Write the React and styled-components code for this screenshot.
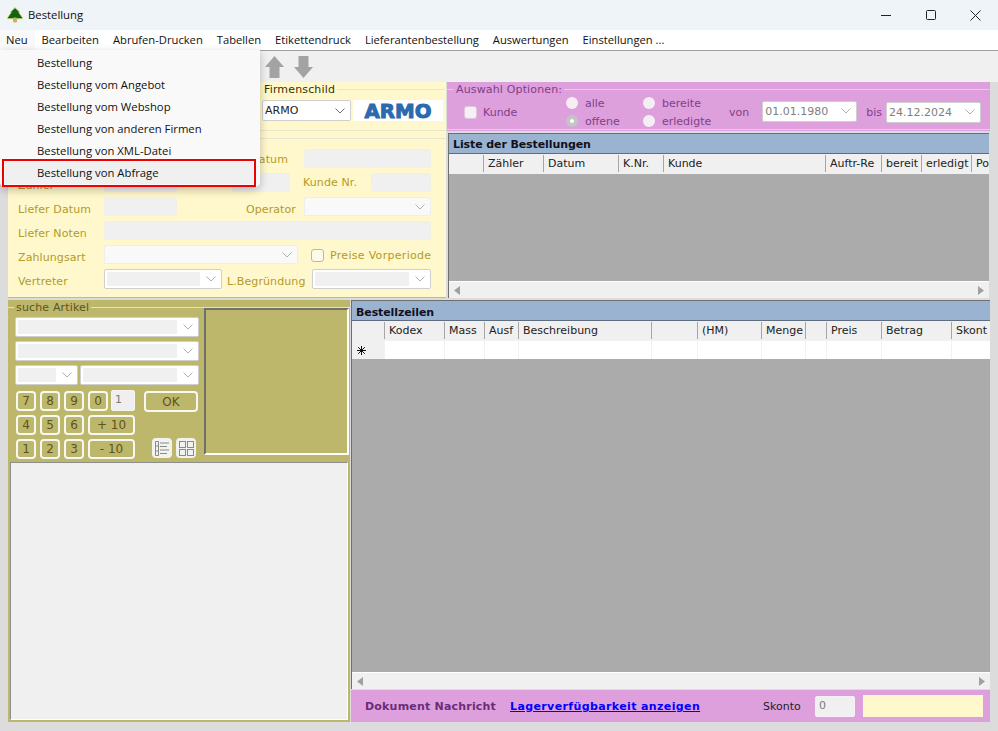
import React from "react";
import styled, { createGlobalStyle } from "styled-components";

const uiFont = `"Open Sans", "Noto Sans", sans-serif`;
const formFont = `"DejaVu Sans", "Noto Sans", sans-serif`;

const GlobalStyle = createGlobalStyle`
  html, body { margin: 0; padding: 0; background: #dcdcdc; }
  * { box-sizing: border-box; }
`;

const Window = styled.div`
  position: relative;
  width: 998px;
  height: 731px;
  overflow: hidden;
  display: flex;
  flex-direction: column;
  background: #dcdcdc;
  font-family: ${uiFont};
`;

const TitleBar = styled.div`
  height: 30px;
  flex: none;
  display: flex;
  align-items: center;
  padding-left: 7px;
  background: #eff4f9;
  font-size: 11.3px;
  color: #111;
`;

const TitleText = styled.span`
  margin: -2px 0 0 5px;
`;

const WinButtons = styled.div`
  margin-left: auto;
  display: flex;
`;

const WinButton = styled.div`
  width: 45px;
  height: 30px;
  display: flex;
  align-items: center;
  justify-content: center;
`;

const MenuBar = styled.div`
  height: 21px;
  flex: none;
  display: flex;
  background: #fff;
  border-bottom: 1px solid #a0a0a0;
`;

const MenuEntry = styled.div`
  padding: 0 7px;
  line-height: 20px;
  font-size: 11.2px;
  color: #111;
  background: ${p => (p.$open ? "#f9f9f9" : "transparent")};
  margin-left: ${p => (p.$open ? "-1px" : "0")};
`;

const Toolbar = styled.div`
  height: 31px;
  flex: none;
  display: flex;
  align-items: center;
  gap: 10px;
  padding-left: 265px;
  background: #f0f0f0;
`;

const Body = styled.div`
  flex: 1;
  display: flex;
  flex-direction: column;
  gap: 2px;
  padding: 0 8px 9px 8px;
`;

const TopRow = styled.div`
  height: 216px;
  flex: none;
  display: flex;
  gap: 1px;
`;

const BottomRow = styled.div`
  flex: 1;
  display: flex;
  gap: 1px;
`;

const YellowPanel = styled.div`
  width: 438px;
  flex: none;
  background: #fff8cc;
  border-bottom: 1px solid #b8b8a8;
  color: #b39a2a;
`;

const Group = styled.fieldset`
  margin: 0;
  min-width: 0;
  padding: 0;
  border: none;
  border-top: 1px solid ${p => p.$line || "#e9e6cf"};
`;

const Legend = styled.legend`
  margin-left: ${p => p.$left || 0}px;
  padding: 0 2px;
  height: 14px;
  line-height: 16px;
  font-family: ${formFont};
  font-size: 11px;
  letter-spacing: 0.15px;
  color: ${p => p.$color || "inherit"};
`;

const FirmRow = styled.div`
  height: 49px;
  padding-left: 254px;
  border-bottom: 1px solid #e9e6cf;
`;

const FirmGroup = styled(Group)`
  height: 48px;
  margin-right: 1px;
`;

const FirmControls = styled.div`
  display: flex;
  gap: 2px;
  margin-top: 4px;
`;

const FirmSelect = styled.div`
  width: 89px;
  flex: none;
`;

const Logo = styled.div`
  width: 90px;
  height: 21px;
  background: #fff;
  display: flex;
  align-items: center;
  justify-content: center;
`;

const FormGroup = styled(Group)`
  margin-top: 7px;
  border-bottom: none;
`;

const FormGrid = styled.div`
  display: grid;
  grid-template-columns: 86px 73px 45px 10px 58px 8px 6px 8px 59px 60px;
  grid-auto-rows: 19px;
  row-gap: 5px;
  padding: 10px 0 0 10px;
`;

const Cell = styled.div`
  grid-column: ${p => p.$col};
  grid-row: ${p => p.$row};
  min-width: 0;
`;

const Label = styled(Cell)`
  display: flex;
  align-items: center;
  justify-content: ${p => (p.$right ? "flex-end" : "flex-start")};
  padding-top: ${p => (p.$low ? 5 : p.$top || 0)}px;
  padding-right: ${p => (p.$right ? 2 : 0)}px;
  padding-left: ${p => p.$pad || 0}px;
  margin-left: ${p => p.$shift || 0}px;
  font-family: ${formFont};
  font-size: 11px;
  letter-spacing: 0.1px;
  white-space: nowrap;
`;

const Field = styled.div`
  height: ${p => p.$h || 19}px;
  background: ${p => p.$bg || "#f0f0f0"};
  border: 1px solid ${p => p.$edge || "#f0f0e6"};
  border-radius: 2px;
  font-family: ${formFont};
  font-size: 11px;
  line-height: 17px;
  padding-left: 3px;
  color: #7b7b7b;
`;

const SkontoField = styled(Field)`
  width: 40px;
  flex: none;
  border-color: #f8f0f8;
`;

const SelectBox = styled.div`
  position: relative;
  height: ${p => p.$h || 20}px;
  background: ${p => (p.$plain ? "#f9f9f9" : "#fff")};
  border: 1px solid ${p => (p.$plain ? "#eeeeea" : "#cfcfcf")};
  border-radius: 2px;
  padding: 2px 21px 2px 2px;
  display: flex;
  align-items: center;
  font-family: ${formFont};
  font-size: 11px;
  color: ${p => p.$color || "#808080"};
  white-space: nowrap;
`;

const SelectFill = styled.div`
  flex: 1;
  align-self: stretch;
  background: ${p => (p.$show ? "#f0f0f0" : "transparent")};
  display: flex;
  align-items: center;
`;

const ChevronWrap = styled.span`
  position: absolute;
  right: 5px;
  top: 50%;
  margin-top: -3px;
  display: flex;
`;

const Check = styled.span`
  display: inline-block;
  width: 13px;
  height: 13px;
  flex: none;
  background: ${p => p.$bg || "#fdfbe8"};
  border: 1px solid ${p => p.$edge || "#b8b8b0"};
  border-radius: 3px;
`;

const CheckLabel = styled(Cell)`
  display: flex;
  align-items: center;
  gap: 6px;
  margin-left: -1px;
  padding-top: 1px;
  font-family: ${formFont};
  font-size: 11px;
  letter-spacing: 0.3px;
  white-space: nowrap;
`;

const RightColumn = styled.div`
  flex: 1;
  display: flex;
  flex-direction: column;
  gap: 2px;
  min-width: 0;
`;

const PinkPanel = styled.div`
  height: 49px;
  flex: none;
  background: #dda0dd;
  color: #7f3f88;
  font-family: ${formFont};
  font-size: 11px;
`;

const PinkGroup = styled(Group)`
  height: 48px;
  border-bottom: 1px solid #eac8ea;
`;

const OptionRow = styled.div`
  display: flex;
  align-items: center;
  height: 32px;
  padding: 0 7px 0 17px;
  margin-top: -1px;
`;

const KundeOption = styled.label`
  width: 102px;
  display: flex;
  align-items: center;
  gap: 6px;
  padding-top: 2px;
`;

const RadioGrid = styled.div`
  width: 163px;
  display: grid;
  grid-template-columns: 77px 86px;
  grid-auto-rows: 18px;
  align-self: flex-start;
  margin-top: -1px;
`;

const RadioOption = styled.label`
  display: flex;
  align-items: center;
  gap: 7px;
`;

const Radio = styled.span`
  width: 12px;
  height: 12px;
  flex: none;
  border-radius: 50%;
  background: ${p => (p.$on ? "#c4c4c4" : "#f5eef5")};
  display: flex;
  align-items: center;
  justify-content: center;
  &::after {
    content: "";
    width: 4px;
    height: 4px;
    border-radius: 50%;
    background: ${p => (p.$on ? "#fff" : "transparent")};
  }
`;

const DateLabel = styled.span`
  margin: 0 ${p => p.$mr || 0}px 0 ${p => p.$ml || 0}px;
  padding-top: 3px;
`;

const DateBox = styled.div`
  width: 95px;
  flex: none;
  margin-top: ${p => p.$top || 0}px;
`;

const GridPanel = styled.div`
  flex: 1;
  min-height: 0;
  display: flex;
  flex-direction: column;
  border-top: 1px solid #6f6f6f;
  border-left: 1px solid #6f6f6f;
  background: #ababab;
`;

const OrderPanel = styled(GridPanel)`
  margin: 0 1px 0 1px;
`;

const GridTitle = styled.div`
  height: 20px;
  flex: none;
  background: #9ab3d1;
  border-bottom: 1px solid #5e6e80;
  padding-left: 4px;
  line-height: ${p => p.$lh || 22}px;
  font-family: ${formFont};
  font-size: 11px;
  font-weight: 700;
  letter-spacing: -0.1px;
  color: #101020;
  overflow: hidden;
`;

const GridRow = styled.div`
  display: grid;
  flex: none;
  height: ${p => p.$h}px;
  grid-template-columns: ${p => p.$cols};
  background: ${p => p.$bg};
  overflow: hidden;
`;

const HeadCell = styled.div`
  border-left: ${p => (p.$first ? "none" : "1px solid #a6a6a6")};
  margin: 1px 0 2px;
  padding-left: 4px;
  line-height: 17px;
  font-family: ${formFont};
  font-size: 11px;
  color: #222;
  white-space: nowrap;
`;

const DataCell = styled.div`
  border-left: ${p => (p.$first ? "none" : "1px solid #f2f2f2")};
  background: ${p => (p.$first ? "#f0f0f0" : "#fff")};
  display: flex;
  align-items: center;
  padding-left: 5px;
`;

const GridFill = styled.div`
  flex: 1;
`;

const ScrollBar = styled.div`
  height: 17px;
  flex: none;
  display: flex;
  align-items: center;
  justify-content: space-between;
  padding: 0 5px;
  background: #f0f0f0;
  border-top: 1px solid #fff;
`;

const ArticlePanel = styled.div`
  width: 342px;
  flex: none;
  background: #bdb76b;
  color: #5d5320;
  padding-bottom: 2px;
  display: flex;
  flex-direction: column;
`;

const ArticleGroup = styled(Group)`
  flex: none;
  border-top-color: #e4e2c4;
`;

const ArticleTop = styled.div`
  display: flex;
  margin-top: -6px;
`;

const SearchColumn = styled.div`
  width: 196px;
  flex: none;
  padding: 9px 0 0 7px;
`;

const SelectStack = styled.div`
  width: 184px;
  display: flex;
  flex-direction: column;
  gap: 4px;
`;

const SelectPair = styled.div`
  display: grid;
  grid-template-columns: 63px 1fr;
  gap: 2px;
`;

const Keypad = styled.div`
  display: grid;
  grid-template-columns: 20px 20px 20px 20px 23px 1px 54px;
  grid-auto-rows: 20px;
  gap: 4px;
  margin: 6px 0 0 1px;
`;

const Key = styled.div`
  grid-column: ${p => p.$col || "auto"};
  grid-row: ${p => p.$row || "auto"};
  border: 2px solid #f8f8f2;
  border-radius: 4px;
  height: ${p => p.$h || 20}px;
  display: flex;
  align-items: center;
  justify-content: center;
  font-family: ${formFont};
  font-size: 12px;
`;

const CountField = styled(Field)`
  grid-column: 5;
  grid-row: 1;
  margin: -1px 0 0 -1px;
  width: 24px;
  height: 21px;
  background: #efefef;
  border-color: #f4f4f0;
`;

const ViewIcons = styled.div`
  grid-column: 7;
  grid-row: 3;
  display: flex;
  gap: 4px;
  padding-left: 8px;
  margin-top: -1px;
`;

const ViewButton = styled.div`
  width: 20px;
  height: 20px;
  border-radius: 4px;
  background: #f2f2ee;
  display: flex;
  align-items: center;
  justify-content: center;
`;

const ImageBox = styled.div`
  width: 145px;
  height: 147px;
  flex: none;
  border: 2px solid #fff;
  border-top-color: #6f6f6f;
  border-left-color: #6f6f6f;
`;

const NotesBox = styled.div`
  flex: 1;
  margin: 3px 2px 0 2px;
  background: #f0f0f0;
  border: 1px solid #8d8d8d;
  border-right-color: #fff;
  border-bottom-color: #fff;
`;

const Footer = styled.div`
  height: 32px;
  flex: none;
  display: flex;
  align-items: center;
  padding: 0 7px 0 14px;
  background: #dda0dd;
  font-family: ${formFont};
  font-size: 11px;
`;

const FooterTitle = styled.span`
  width: 145px;
  flex: none;
  font-weight: 700;
  letter-spacing: 0.2px;
  color: #6c2c78;
`;

const FooterLink = styled.a`
  width: 253px;
  flex: none;
  font-weight: 700;
  letter-spacing: 0.38px;
  color: #0000ff;
  text-decoration: underline;
`;

const FooterLabel = styled.span`
  width: 52px;
  flex: none;
  color: #222;
`;

const MessageBox = styled.div`
  width: 120px;
  height: 22px;
  margin-left: 8px;
  background: #fff8cc;
`;

const BestellPanel = styled(RightColumn)`
  gap: 1px;
`;

/* dropdown lies over the form, as in the app */
const Dropdown = styled.div`
  position: absolute;
  top: 50px;
  left: 0;
  width: 260px;
  height: 137px;
  padding-top: 2px;
  background: #f9f9f9;
  border-radius: 0 0 5px 5px;
  box-shadow: 0 3px 8px rgba(0, 0, 0, 0.25);
`;

const DropItem = styled.div`
  height: 22px;
  margin: 0 7px 0 5px;
  padding-left: 32px;
  line-height: 21px;
  font-size: 11.3px;
  color: #111;
  background: ${p => (p.$marked ? "#f0f0f0" : "transparent")};
  outline: ${p => (p.$marked ? "2px solid #f00000" : "none")};
  outline-offset: 1px;
`;

const Chevron = ({ dark }) => (
  <svg width="10" height="6" viewBox="0 0 10 6">
    <polyline points="0.5,0.5 5,5 9.5,0.5" fill="none" stroke={dark ? "#707070" : "#b0b0b0"} strokeWidth="1" />
  </svg>
);

const Select = ({ value, plain, fill, h, color }) => (
  <SelectBox $plain={plain} $h={h} $color={color}>
    <SelectFill $show={fill}>{value}</SelectFill>
    <ChevronWrap><Chevron dark={color} /></ChevronWrap>
  </SelectBox>
);

const TreeIcon = () => (
  <svg width="16" height="16" viewBox="0 0 16 16">
    <path
      d="M8 0.6 L13 5.4 H11.8 L15.4 10.4 L15.4 11.8 H0.6 L0.6 10.4 L4.2 5.4 H3 Z"
      fill="#0c6518"
      stroke="#e6e06e"
      strokeWidth="0.9"
      strokeLinejoin="round"
    />
    <rect x="6" y="10.6" width="4" height="4.9" rx="1.2" fill="#c9b25a" />
  </svg>
);

const MinIcon = () => (
  <svg width="10" height="10" viewBox="0 0 10 10">
    <line x1="0" y1="5.5" x2="10" y2="5.5" stroke="#222" />
  </svg>
);

const MaxIcon = () => (
  <svg width="10" height="10" viewBox="0 0 10 10">
    <rect x="0.5" y="0.5" width="9" height="9" rx="1" fill="none" stroke="#222" />
  </svg>
);

const CloseIcon = () => (
  <svg width="11" height="11" viewBox="0 0 11 11">
    <path d="M0.5 0.5 L10.5 10.5 M10.5 0.5 L0.5 10.5" stroke="#222" />
  </svg>
);

const ArrowUp = () => (
  <svg width="19" height="22" viewBox="0 0 19 22">
    <path d="M9.5 0 L19 11 H14.5 V22 H4.5 V11 H0 Z" fill="#a3a3a3" />
  </svg>
);

const ArrowDown = () => (
  <svg width="19" height="22" viewBox="0 0 19 22">
    <path d="M9.5 22 L19 11 H14.5 V0 H4.5 V11 H0 Z" fill="#a3a3a3" />
  </svg>
);

const ArmoLogo = () => (
  <svg width="70" height="21" viewBox="0 0 70 21">
    <text
      x="35"
      y="17.5"
      textAnchor="middle"
      textLength="67"
      lengthAdjust="spacingAndGlyphs"
      fontFamily="DejaVu Sans"
      fontWeight="700"
      fontSize="20"
      fill="#2a6aae"
      stroke="#2a6aae"
      strokeWidth="1"
    >
      ARMO
    </text>
  </svg>
);

const Star = () => (
  <svg width="9" height="9" viewBox="0 0 9 9">
    <path d="M4.5 0 V9 M0 4.5 H9 M1.2 1.2 L7.8 7.8 M7.8 1.2 L1.2 7.8" stroke="#111" />
  </svg>
);

const ListIcon = () => (
  <svg width="15" height="15" viewBox="0 0 15 15" fill="none" stroke="#8a8a8a">
    <path d="M0.5 0.5 H3.5 V14.5 H0.5 Z M0.5 5 H3.5 M0.5 10 H3.5" />
    <path d="M5 2 H14 M5 5.5 H12 M5 9 H14 M5 12.5 H12" />
  </svg>
);

const TilesIcon = () => (
  <svg width="15" height="15" viewBox="0 0 15 15" fill="none" stroke="#8a8a8a">
    <rect x="0.5" y="0.5" width="6" height="6" />
    <rect x="8.5" y="0.5" width="6" height="6" />
    <rect x="0.5" y="8.5" width="6" height="6" />
    <rect x="8.5" y="8.5" width="6" height="6" />
  </svg>
);

const ScrollLeft = () => (
  <svg width="6" height="9" viewBox="0 0 6 9"><path d="M6 0 V9 L0 4.5 Z" fill="#a0a0a0" /></svg>
);

const ScrollRight = () => (
  <svg width="6" height="9" viewBox="0 0 6 9"><path d="M0 0 V9 L6 4.5 Z" fill="#a0a0a0" /></svg>
);

const Scroller = () => (
  <ScrollBar>
    <ScrollLeft />
    <ScrollRight />
  </ScrollBar>
);

const menuEntries = ["Neu", "Bearbeiten", "Abrufen-Drucken", "Tabellen", "Etikettendruck", "Lieferantenbestellung", "Auswertungen", "Einstellungen ..."];

const dropItems = ["Bestellung", "Bestellung vom Angebot", "Bestellung vom Webshop", "Bestellung von anderen Firmen", "Bestellung von XML-Datei", "Bestellung von Abfrage"];

const orderCols = "34px 60px 75px 45px 162px 56px 40px 50px 1fr";
const orderHeads = ["", "Zähler", "Datum", "K.Nr.", "Kunde", "Auftr-Re", "bereit", "erledigt", "Po"];

const lineCols = "32px 60px 40px 34px 133px 46px 64px 44px 21px 55px 70px 1fr";
const lineHeads = ["", "Kodex", "Mass", "Ausf", "Beschreibung", "", "(HM)", "Menge", "", "Preis", "Betrag", "Skont"];

const keyRows = [["7", "8", "9", "0"], ["4", "5", "6"], ["1", "2", "3"]];

const OrderForm = () => (
  <FormGrid>
    <Label $col="5 / 6" $row="1" $right $top={2}>Datum</Label>
    <Cell $col="8 / 11" $row="1"><Field /></Cell>

    <Label $col="1 / 2" $row="2" $low>Zähler</Label>
    <Cell $col="2 / 3" $row="2"><Field /></Cell>
    <Cell $col="5 / 6" $row="2"><Field /></Cell>
    <Label $col="8 / 10" $row="2" $shift={-1}>Kunde Nr.</Label>
    <Cell $col="10 / 11" $row="2"><Field /></Cell>

    <Label $col="1 / 2" $row="3" $low>Liefer Datum</Label>
    <Cell $col="2 / 3" $row="3"><Field /></Cell>
    <Label $col="5 / 7" $row="3" $right $low>Operator</Label>
    <Cell $col="8 / 11" $row="3"><Select plain h={19} /></Cell>

    <Label $col="1 / 2" $row="4" $low>Liefer Noten</Label>
    <Cell $col="2 / 11" $row="4"><Field /></Cell>

    <Label $col="1 / 2" $row="5" $low>Zahlungsart</Label>
    <Cell $col="2 / 7" $row="5"><Select plain h={19} /></Cell>
    <CheckLabel $col="9 / 11" $row="5"><Check />Preise Vorperiode</CheckLabel>

    <Label $col="1 / 2" $row="6" $low>Vertreter</Label>
    <Cell $col="2 / 4" $row="6"><Select fill /></Cell>
    <Label $col="4 / 9" $row="6" $low $pad={5}>L.Begründung</Label>
    <Cell $col="9 / 11" $row="6"><Select fill /></Cell>
  </FormGrid>
);

const Options = () => (
  <OptionRow>
    <KundeOption><Check $bg="#f6eff6" $edge="#dcc8dc" />Kunde</KundeOption>
    <RadioGrid>
      <RadioOption><Radio />alle</RadioOption>
      <RadioOption><Radio />bereite</RadioOption>
      <RadioOption><Radio $on />offene</RadioOption>
      <RadioOption><Radio />erledigte</RadioOption>
    </RadioGrid>
    <DateLabel $mr={13}>von</DateLabel>
    <DateBox><Select value="01.01.1980" h={21} /></DateBox>
    <DateLabel $ml={9} $mr={4}>bis</DateLabel>
    <DateBox $top={2}><Select value="24.12.2024" h={21} /></DateBox>
  </OptionRow>
);

const ArticleSearch = () => (
  <SearchColumn>
    <SelectStack>
      <Select fill />
      <Select fill />
      <SelectPair>
        <Select fill />
        <Select fill />
      </SelectPair>
    </SelectStack>
    <Keypad>
      {keyRows.map((row, r) =>
        row.map((k, c) => <Key key={k} $col={c + 1} $row={r + 1}>{k}</Key>)
      )}
      <CountField>1</CountField>
      <Key $col="7" $row="1" $h={21}>OK</Key>
      <Key $col="4 / 6" $row="2">+ 10</Key>
      <Key $col="4 / 6" $row="3">- 10</Key>
      <ViewIcons>
        <ViewButton><ListIcon /></ViewButton>
        <ViewButton><TilesIcon /></ViewButton>
      </ViewIcons>
    </Keypad>
  </SearchColumn>
);

export default function App() {
  return (
    <Window>
      <GlobalStyle />
      <TitleBar>
        <TreeIcon />
        <TitleText>Bestellung</TitleText>
        <WinButtons>
          <WinButton><MinIcon /></WinButton>
          <WinButton><MaxIcon /></WinButton>
          <WinButton><CloseIcon /></WinButton>
        </WinButtons>
      </TitleBar>
      <MenuBar>
        {menuEntries.map((m, i) => <MenuEntry key={m} $open={i === 0}>{m}</MenuEntry>)}
      </MenuBar>
      <Toolbar>
        <ArrowUp />
        <ArrowDown />
      </Toolbar>
      <Body>
        <TopRow>
          <YellowPanel>
            <FirmRow>
              <FirmGroup>
                <Legend $color="#3a3000">Firmenschild</Legend>
                <FirmControls>
                  <FirmSelect>
                    <Select value="ARMO" h={21} color="#222" />
                  </FirmSelect>
                  <Logo><ArmoLogo /></Logo>
                </FirmControls>
              </FirmGroup>
            </FirmRow>
            <FormGroup>
              <OrderForm />
            </FormGroup>
          </YellowPanel>
          <RightColumn>
            <PinkPanel>
              <PinkGroup $line="#eac8ea">
                <Legend $left={7}>Auswahl Optionen:</Legend>
                <Options />
              </PinkGroup>
            </PinkPanel>
            <OrderPanel>
              <GridTitle>Liste der Bestellungen</GridTitle>
              <GridRow $h={20} $cols={orderCols} $bg="#f0f0f0">
                {orderHeads.map((h, i) => <HeadCell key={i} $first={i === 0}>{h}</HeadCell>)}
              </GridRow>
              <GridFill />
              <Scroller />
            </OrderPanel>
          </RightColumn>
        </TopRow>
        <BottomRow>
          <ArticlePanel>
            <ArticleGroup>
              <Legend $left={6}>suche Artikel</Legend>
              <ArticleTop>
                <ArticleSearch />
                <ImageBox />
              </ArticleTop>
            </ArticleGroup>
            <NotesBox />
          </ArticlePanel>
          <BestellPanel>
            <GridPanel>
              <GridTitle $lh={24}>Bestellzeilen</GridTitle>
              <GridRow $h={20} $cols={lineCols} $bg="#f0f0f0">
                {lineHeads.map((h, i) => <HeadCell key={i} $first={i === 0}>{h}</HeadCell>)}
              </GridRow>
              <GridRow $h={18} $cols={lineCols} $bg="#fff">
                {lineHeads.map((h, i) => <DataCell key={i} $first={i === 0}>{i === 0 && <Star />}</DataCell>)}
              </GridRow>
              <GridFill />
              <Scroller />
            </GridPanel>
            <Footer>
              <FooterTitle>Dokument Nachricht</FooterTitle>
              <FooterLink href="#">Lagerverfügbarkeit anzeigen</FooterLink>
              <FooterLabel>Skonto</FooterLabel>
              <SkontoField $h={21}>0</SkontoField>
              <MessageBox />
            </Footer>
          </BestellPanel>
        </BottomRow>
      </Body>
      <Dropdown>
        {dropItems.map((d, i) => <DropItem key={d} $marked={i === 5}>{d}</DropItem>)}
      </Dropdown>
    </Window>
  );
}
